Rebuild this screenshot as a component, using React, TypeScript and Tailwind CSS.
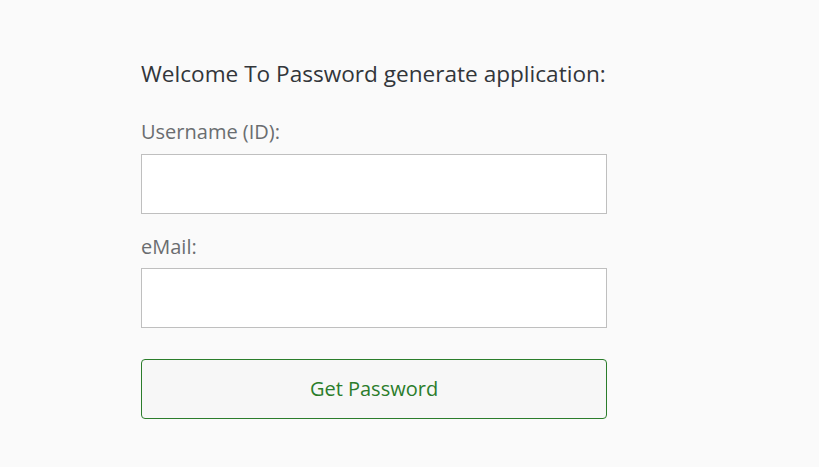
export default function App() {
  return (
    <main className="min-h-[467px] w-full bg-[#fafafa] pl-[141px] pt-[56px] font-['Open_Sans',sans-serif]">
      <div className="flex w-[466px] flex-col">
        <h1 className="text-[22.6px] leading-[36px] text-[#32363a]">
          Welcome To Password generate application:
        </h1>

        {/* USERNAME */}
        <label className="mt-[27px] text-[20px] leading-[26px] text-[#6a6d70]">
          Username (ID):
        </label>
        <input
          className="mt-[9px] h-[60px] w-full border border-[#bfbfbf] bg-white px-3 text-[18px] text-[#32363a] outline-none"
          type="text"
        />

        {/* EMAIL */}
        <label className="mt-[20px] text-[20px] leading-[26px] text-[#6a6d70]">
          eMail:
        </label>
        <input
          className="mt-[8px] h-[60px] w-full border border-[#bfbfbf] bg-white px-3 text-[18px] text-[#32363a] outline-none"
          type="email"
        />

        {/* BUTTON */}
        <button className="mt-[31px] h-[60px] w-full rounded-[4px] border border-[#2b7d2b] bg-[#f7f7f7] text-[20px] text-[#2b7d2b]">
          Get Password
        </button>
      </div>
    </main>
  );
}
